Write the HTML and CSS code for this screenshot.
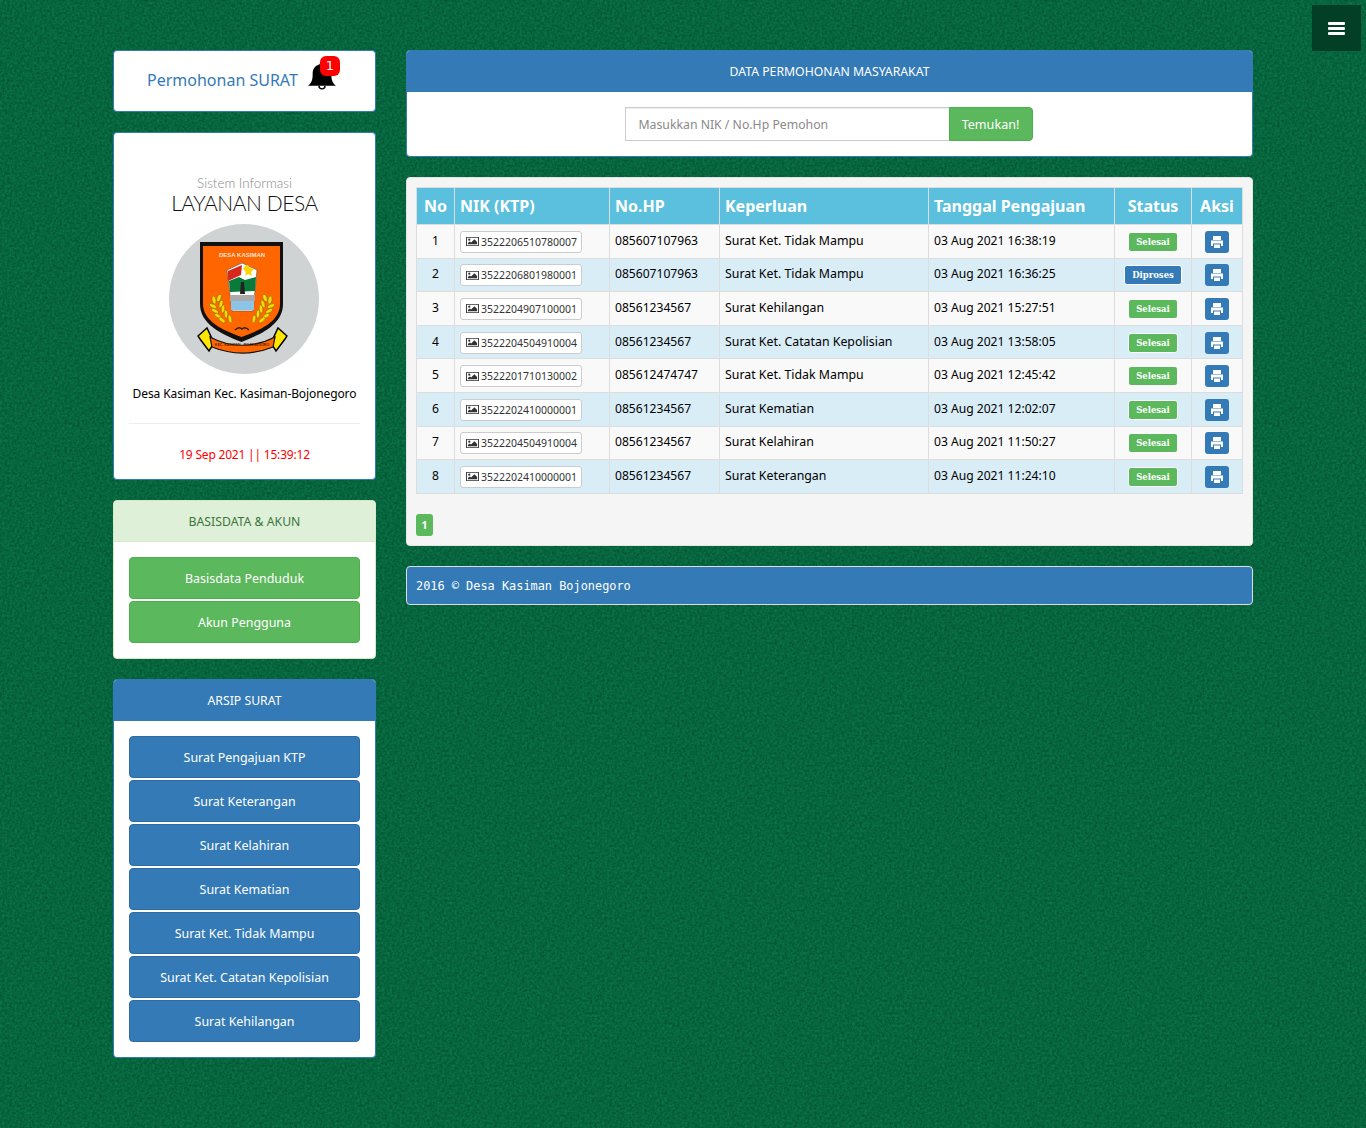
FILE: index.html
```html
<!DOCTYPE html>
<html lang="id">
<head>
    <meta charset="UTF-8">
    <title>Layanan Desa</title>
    <link rel="stylesheet" href="styles.css">
</head>
<body>
    <a class="menu-toggle" href="#"><span></span><span></span><span></span></a>

    <div class="container">
        <div class="kolom-kiri">
            <div class="panel panel-judul">
                <a class="judul-link" href="#">Permohonan SURAT</a>
                <span class="lonceng">
                    <svg viewBox="0 0 30 30" width="28" height="28"><path d="M15 0c-1.500 0-2.500 1-2.500 2.500C7 4 5 8 5 13c0 6-1 9-5 12.500h30C26 22 25 19 25 13c0-5-2-9-7.500-10.500C17.500 1 16.500 0 15 0z"/><path d="M11 25.500a4 4 0 0 0 8 0h-1.500a2.500 2.500 0 0 1-5 0z"/></svg>
                    <b class="lencana">1</b>
                </span>
            </div>

            <div class="panel panel-profil">
                <div class="profil-kecil">Sistem Informasi</div>
                <div class="profil-besar">LAYANAN DESA</div>
                <div class="lingkaran">
                    <svg viewBox="0 0 150 150" width="150" height="150">
                        <defs>
                            <g id="padi" fill="#f5d90a" stroke="#7a6400" stroke-width=".5">
                                <ellipse cx="45" cy="76" rx="2" ry="4" transform="rotate(-10 45 76)"/>
                                <ellipse cx="50" cy="74" rx="2" ry="4" transform="rotate(20 50 74)"/>
                                <ellipse cx="44" cy="82" rx="4" ry="1.800" transform="rotate(25 44 82)"/>
                                <ellipse cx="52" cy="80" rx="1.800" ry="4" transform="rotate(15 52 80)"/>
                                <ellipse cx="46" cy="87" rx="4" ry="1.800" transform="rotate(30 46 87)"/>
                                <ellipse cx="54" cy="85" rx="1.800" ry="4" transform="rotate(5 54 85)"/>
                                <ellipse cx="49" cy="92" rx="4" ry="1.800" transform="rotate(35 49 92)"/>
                                <ellipse cx="57" cy="90" rx="1.800" ry="4" transform="rotate(-5 57 90)"/>
                                <ellipse cx="53" cy="96" rx="4" ry="1.800" transform="rotate(40 53 96)"/>
                                <ellipse cx="61" cy="95" rx="1.800" ry="4" transform="rotate(-10 61 95)"/>
                            </g>
                        </defs>
                        <path d="M31 18h83v62c0 20-21 30-41.500 38C52 110 31 100 31 80z" fill="#111"/>
                        <path d="M34 22h77v58c0 17-19 26-38.500 33C53 106 34 97 34 80z" fill="#ff6600"/>
                        <text class="logo-nama" x="73" y="33" text-anchor="middle">DESA KASIMAN</text>
                        <path d="M58 46l15-7 15 7-4 41H63z" fill="#fff" stroke="#555" stroke-width=".6"/>
                        <path d="M59 47l14-6-1 10-13 6z" fill="#d8281e"/>
                        <path d="M60 57l10-4 6 3 11-3-1 14-25 1z" fill="#0a7a3a"/>
                        <path d="M76 42l3-1 2 3 4 1-3 3 1 4-4-2-3 2 1-4-3-3z" fill="#ffd400"/>
                        <path d="M72 58h3l1 12h-5z" fill="#222"/>
                        <rect x="61" y="71" width="25" height="6" fill="#aaa"/>
                        <rect x="62" y="77" width="23" height="9" fill="#8cc4e8"/>
                        <use href="#padi"/>
                        <use href="#padi" transform="matrix(-1 0 0 1 146 0)"/>
                        <path d="M66 106c3-3 5-3 7-1 2-2 4-2 7 1" fill="none" stroke="#222" stroke-width="1.500"/>
                        <path d="M29 112l9-8 7 15-5 8-6-8-3-4z" fill="#ffe600" stroke="#000" stroke-width="1.500"/>
                        <path d="M118 112l-9-8-7 15 5 8 6-8 3-4z" fill="#ffe600" stroke="#000" stroke-width="1.500"/>
                        <path d="M41 113c20 11 44 11 65 0l-2 10c-20 8-41 8-61 0z" fill="#ff6600" stroke="#111" stroke-width="1.200"/>
                        <text class="logo-ribbon" x="73" y="122" text-anchor="middle">KEC. KASIMAN - BOJONEGORO</text>
                    </svg>
                </div>
                <div class="profil-alamat">Desa Kasiman Kec. Kasiman-Bojonegoro</div>
                <hr class="garis">
                <div class="profil-waktu">19 Sep 2021 || 15:39:12</div>
            </div>

            <div class="panel panel-hijau">
                <div class="panel-heading">BASISDATA &amp; AKUN</div>
                <div class="panel-body tombol-daftar">
                    <a class="btn-besar hijau" href="#">Basisdata Penduduk</a>
                    <a class="btn-besar hijau" href="#">Akun Pengguna</a>
                </div>
            </div>

            <div class="panel panel-biru">
                <div class="panel-heading">ARSIP SURAT</div>
                <div class="panel-body tombol-daftar">
                    <a class="btn-besar biru" href="#">Surat Pengajuan KTP</a>
                    <a class="btn-besar biru" href="#">Surat Keterangan</a>
                    <a class="btn-besar biru" href="#">Surat Kelahiran</a>
                    <a class="btn-besar biru" href="#">Surat Kematian</a>
                    <a class="btn-besar biru" href="#">Surat Ket. Tidak Mampu</a>
                    <a class="btn-besar biru" href="#">Surat Ket. Catatan Kepolisian</a>
                    <a class="btn-besar biru" href="#">Surat Kehilangan</a>
                </div>
            </div>
        </div>

        <div class="kolom-kanan">
            <div class="panel panel-biru">
                <div class="panel-heading">DATA PERMOHONAN MASYARAKAT</div>
                <div class="panel-body cari-body">
                    <form class="cari-form">
                        <input class="cari-input" type="text" placeholder="Masukkan NIK / No.Hp Pemohon">
                        <button class="cari-btn" type="button">Temukan!</button>
                    </form>
                </div>
            </div>

            <div class="panel panel-data">
                <table class="tabel">
                    <thead>
                        <tr>
                            <th class="kol-no">No</th>
                            <th class="kol-nik">NIK (KTP)</th>
                            <th class="kol-hp">No.HP</th>
                            <th class="kol-perlu">Keperluan</th>
                            <th class="kol-tgl">Tanggal Pengajuan</th>
                            <th class="kol-status">Status</th>
                            <th class="kol-aksi">Aksi</th>
                        </tr>
                    </thead>
                    <tbody id="isi-tabel"></tbody>
                </table>
                <a class="halaman" href="#">1</a>
            </div>

            <div class="panel-kaki">2016 © Desa Kasiman Bojonegoro</div>
        </div>
    </div>

    <script>
        const data = [
            ['3522206510780007', '085607107963', 'Surat Ket. Tidak Mampu', '03 Aug 2021 16:38:19', 'Selesai'],
            ['3522206801980001', '085607107963', 'Surat Ket. Tidak Mampu', '03 Aug 2021 16:36:25', 'Diproses'],
            ['3522204907100001', '08561234567', 'Surat Kehilangan', '03 Aug 2021 15:27:51', 'Selesai'],
            ['3522204504910004', '08561234567', 'Surat Ket. Catatan Kepolisian', '03 Aug 2021 13:58:05', 'Selesai'],
            ['3522201710130002', '085612474747', 'Surat Ket. Tidak Mampu', '03 Aug 2021 12:45:42', 'Selesai'],
            ['3522202410000001', '08561234567', 'Surat Kematian', '03 Aug 2021 12:02:07', 'Selesai'],
            ['3522204504910004', '08561234567', 'Surat Kelahiran', '03 Aug 2021 11:50:27', 'Selesai'],
            ['3522202410000001', '08561234567', 'Surat Keterangan', '03 Aug 2021 11:24:10', 'Selesai']
        ];

        const ikonGambar = '<svg viewBox="0 0 14 12" width="13" height="11"><path fill-rule="evenodd" d="M0 1h14v10H0zM1 2v8h12V2z" fill="#333"/><circle cx="3.500" cy="4" r="1.200" fill="#333"/><path d="M2 9V7.500L4 6l1.500 1L9 3.500l3 3V9z" fill="#333"/></svg>';
        const ikonCetak = '<svg viewBox="0 0 14 14" width="14" height="14"><path fill="#fff" d="M3 1h8v4H3zM1 5.500h12V11h-2V8.500H3V11H1zM4 9.500h6V13H4z"/></svg>';

        document.getElementById('isi-tabel').innerHTML = data.map((d, i) => `
            <tr>
                <td class="tengah">${i + 1}</td>
                <td><a class="btn-nik" href="#">${ikonGambar}${d[0]}</a></td>
                <td>${d[1]}</td>
                <td class="sel-perlu">${d[2]}</td>
                <td>${d[3]}</td>
                <td class="tengah"><span class="status ${d[4] === 'Selesai' ? 'hijau' : 'biru'}">${d[4]}</span></td>
                <td class="tengah"><a class="btn-cetak" href="#">${ikonCetak}</a></td>
            </tr>`).join('');
    </script>
</body>
</html>
```

FILE: styles.css
```css
* {
    box-sizing: border-box;
}

body {
    margin: 0;
    min-height: 1128px;
    font-family: "Noto Sans", sans-serif;
    font-size: 12px;
    color: #000;
    background-color: #097548;
    background-image: url("data:image/svg+xml,%3Csvg xmlns='http://www.w3.org/2000/svg' width='300' height='300'%3E%3Cfilter id='n'%3E%3CfeTurbulence type='fractalNoise' baseFrequency='.4' numOctaves='3' stitchTiles='stitch'/%3E%3CfeColorMatrix values='0 0 0 0 0 0 0 0 0 .03 0 0 0 0 .012 0 0 0 .8 -.17'/%3E%3C/filter%3E%3Crect width='300' height='300' filter='url(%23n)'/%3E%3C/svg%3E");
}

a {
    text-decoration: none;
}

.menu-toggle {
    position: absolute;
    top: 5px;
    left: 1312px;
    width: 49px;
    height: 46px;
    background-color: #033f27;
    display: flex;
    flex-direction: column;
    justify-content: center;
    align-items: center;
    gap: 2px;
}

.menu-toggle span {
    display: block;
    width: 17px;
    height: 3px;
    background-color: #fff;
    border-radius: 1px;
}

.container {
    width: 1140px;
    margin-left: 113px;
    padding-top: 50px;
    display: flex;
    align-items: flex-start;
    gap: 30px;
}

.kolom-kiri {
    width: 263px;
    flex: none;
}

.kolom-kanan {
    width: 847px;
    flex: none;
}

.panel {
    background-color: #fff;
    border: 1px solid #337ab7;
    border-radius: 4px;
    margin-bottom: 20px;
    overflow: hidden;
}

.panel-heading {
    height: 41px;
    line-height: 41px;
    text-align: center;
    font-size: 12.250px;
}

.panel-biru .panel-heading {
    background-color: #337ab7;
    color: #fff;
}

.panel-hijau {
    border-color: #d6e9c6;
}

.panel-hijau .panel-heading {
    background-color: #dff0d8;
    color: #3c763d;
    border-bottom: 1px solid #d6e9c6;
}

.panel-judul {
    height: 62px;
    padding: 0 0 2px 33px;
    display: flex;
    align-items: center;
    gap: 10px;
    overflow: visible;
}

.judul-link {
    font-size: 16px;
    color: #337ab7;
}

.lonceng {
    position: relative;
    display: block;
    width: 28px;
    height: 28px;
    margin-top: -8px;
}

.lonceng svg {
    display: block;
}

.lencana {
    position: absolute;
    top: -6px;
    left: 12px;
    width: 20px;
    height: 20px;
    line-height: 19px;
    text-align: center;
    background-color: #f00;
    color: #fff;
    border-radius: 6px;
    font-size: 13px;
    font-weight: normal;
    font-family: "DejaVu Sans", sans-serif;
}

.panel-profil {
    height: 348px;
    padding: 42px 15px 0;
    text-align: center;
}

.profil-kecil {
    font-family: Lato, sans-serif;
    font-weight: 300;
    font-size: 13.400px;
    line-height: 16px;
    color: #888;
}

.profil-besar {
    font-family: Lato, sans-serif;
    font-weight: 300;
    font-size: 21px;
    letter-spacing: -.45px;
    line-height: 24px;
    color: #111;
}

.lingkaran {
    width: 150px;
    height: 150px;
    margin: 9px 0 0 40px;
    border-radius: 50%;
    background-color: #d0d3d4;
}

.lingkaran svg {
    display: block;
}

.logo-nama {
    font-family: "Liberation Sans", sans-serif;
    font-size: 6px;
    font-weight: bold;
    fill: #fbe3d5;
}

.logo-ribbon {
    font-family: "Liberation Sans", sans-serif;
    font-size: 3.500px;
    font-weight: bold;
    fill: #5a2400;
}

.profil-alamat {
    margin-top: 11px;
    line-height: 18px;
    white-space: nowrap;
    letter-spacing: -.1px;
}

.garis {
    border: 0;
    border-top: 1px solid #eee;
    margin: 20px 0 21px;
}

.profil-waktu {
    color: #f00;
    line-height: 20px;
    letter-spacing: -.2px;
}

.panel-body {
    padding: 15px;
}

.tombol-daftar {
    display: flex;
    flex-direction: column;
    gap: 2px;
}

.btn-besar {
    display: block;
    height: 42px;
    line-height: 41px;
    text-align: center;
    color: #fff;
    border-radius: 4px;
    border: 1px solid;
    font-size: 12.450px;
}

.hijau {
    background-color: #5cb85c;
    border-color: #4cae4c;
}

.biru {
    background-color: #337ab7;
    border-color: #2e6da4;
}

.cari-body {
    height: 64px;
    display: flex;
    justify-content: center;
}

.cari-form {
    display: flex;
    width: 408px;
    height: 34px;
    margin-right: 2px;
}

.cari-input {
    width: 324px;
    height: 34px;
    padding: 6px 13px;
    border: 1px solid #ccc;
    border-right: 0;
    font-family: "Noto Sans", sans-serif;
    font-size: 12.250px;
    box-shadow: inset 0 1px 1px rgba(0, 0, 0, .075);
}

.cari-input::placeholder {
    color: #8a8a8a;
}

.cari-btn {
    width: 84px;
    height: 34px;
    background-color: #5cb85c;
    border: 1px solid #4cae4c;
    border-radius: 0 4px 4px 0;
    color: #fff;
    font-family: "Noto Sans", sans-serif;
    font-size: 12.600px;
}

.panel-data {
    background-color: #f5f5f5;
    border-color: #e3e3e3;
    height: 369px;
    padding: 9px;
}

.tabel {
    width: 826px;
    border-collapse: collapse;
    table-layout: fixed;
}

.tabel th,
.tabel td {
    border: 1px solid #ddd;
    padding: 0 5px 2px;
    height: 33.600px;
    font-size: 12.100px;
}

.tabel th {
    height: 37px;
    padding-bottom: 1px;
    background-color: #5bc0de;
    color: #fff;
    font-size: 16px;
    text-align: left;
}

.tabel td.sel-perlu {
    font-size: 12.350px;
}

.tabel tbody tr:nth-child(odd) td {
    background-color: #f9f9f9;
}

.tabel tbody tr:nth-child(even) td {
    background-color: #d9edf7;
}

.tabel th.kol-no,
.tabel th.kol-status,
.tabel th.kol-aksi {
    text-align: center;
}

.kol-no { width: 38px; }
.kol-nik { width: 155px; }
.kol-hp { width: 110px; }
.kol-perlu { width: 209px; }
.kol-tgl { width: 186px; }
.kol-status { width: 77px; }
.kol-aksi { width: 51px; }

.tabel td.tengah {
    text-align: center;
}

.btn-nik {
    display: inline-flex;
    align-items: center;
    gap: 2px;
    height: 22px;
    padding: 0 4px 0 5px;
    margin-top: 3px;
    background-color: #fff;
    border: 1px solid #ccc;
    border-radius: 3px;
    color: #333;
    font-size: 10.500px;
    vertical-align: middle;
}

.status {
    display: inline-block;
    padding: 0 7px;
    height: 20px;
    line-height: 18px;
    border: 1px solid;
    border-radius: 3px;
    color: #fff;
    font-family: "DejaVu Serif", serif;
    font-size: 8.500px;
    font-weight: bold;
    margin-top: 3px;
    vertical-align: middle;
}

.btn-cetak {
    display: inline-flex;
    align-items: center;
    justify-content: center;
    width: 24px;
    height: 22px;
    margin-top: 3px;
    background-color: #337ab7;
    border-radius: 3px;
    vertical-align: middle;
}

.halaman {
    display: block;
    width: 17px;
    height: 22px;
    line-height: 22px;
    margin-top: 20px;
    text-align: center;
    background-color: #5cb85c;
    border-radius: 3px;
    color: #fff;
    font-size: 10.500px;
    font-weight: bold;
}

.panel-kaki {
    height: 39px;
    line-height: 38px;
    padding-left: 9px;
    background-color: #337ab7;
    border: 1px solid #ddd;
    border-radius: 4px;
    color: #fff;
    font-family: "DejaVu Sans Mono", monospace;
    font-size: 11.900px;
}
```
